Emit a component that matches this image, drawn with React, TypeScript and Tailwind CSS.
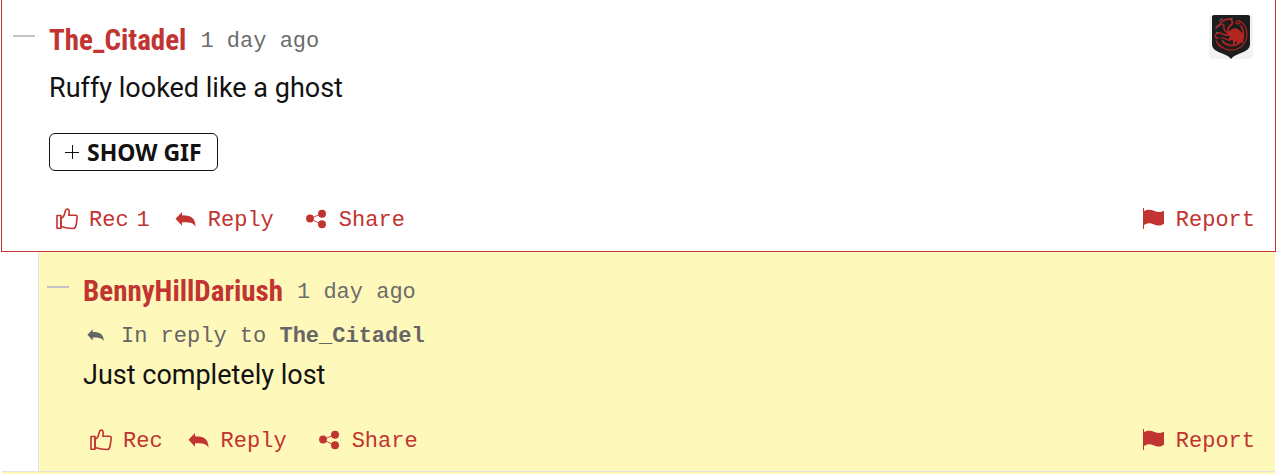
import type { ReactNode } from 'react';

interface CommentProps {
  author: string;
  time: string;
  text: string;
  recs?: number;
  replyTo?: string;
  hasGif?: boolean;
  flair?: ReactNode;
}

const MONO = "font-['Liberation_Mono',monospace]";

function ThumbIcon() {
  return (
    <svg className="h-[22px] w-[22px]" viewBox="0 0 22 22" fill="none" stroke="currentColor" strokeWidth="1.6" strokeLinejoin="round" aria-hidden="true">
      <path d="M1 7.500h4v12.800H1z" />
      <path d="M5 18.500V9.500h1.500C8.200 8.300 8.800 5.500 9.300 3 9.700.6 12.700.5 13.100 2.800c.3 1.800-.1 3.300-.3 4.400h6.500c1.500 0 2 .9 1.800 2.200-.2 2-.4 4.500-1 7.600-.4 2.200-1.200 3.600-3 3.500-4.300-.1-8-.7-12.100-2z" />
    </svg>
  );
}

function ReplyIcon({ className = 'h-[22px] w-[22px]' }: { className?: string }) {
  return (
    <svg className={className} viewBox="0 0 22 22" fill="currentColor" aria-hidden="true">
      <path d="M.5 10.800 7 4v3.300c9 0 13.500 2.500 13.500 11.500-1.500-3.500-4.500-4.800-13.500-4.600v3.600z" />
    </svg>
  );
}

function ShareIcon() {
  return (
    <svg className="h-[22px] w-[22px]" viewBox="0 0 22 22" fill="currentColor" aria-hidden="true">
      <path d="M16 5.500 4 10.700l12 5.800" fill="none" stroke="currentColor" strokeWidth="0.9" />
      <circle cx="4" cy="10.500" r="3.900" />
      <circle cx="16" cy="5.700" r="4" />
      <circle cx="16" cy="16.300" r="4" />
    </svg>
  );
}

function FlagIcon() {
  return (
    <svg className="h-[22px] w-[22px]" viewBox="0 0 22 22" fill="currentColor" aria-hidden="true">
      <path d="M0 0h1v21H0z" />
      <path d="M1 3c4-2 7-1.500 10.500 0 3.500 1.300 6 1.200 9.500-.3v13c-3.500 2.300-6.500 2.300-10 .8-4-1.700-6.500-1.500-10 .5z" />
    </svg>
  );
}

function Crest() {
  return (
    <svg className="h-11 w-11" viewBox="0 0 44 44" role="img" aria-label="House crest">
      <rect width="44" height="44" rx="4" fill="#f3f3f3" />
      <path d="M3 1.500Q3 0 5 0h34q2 0 2 1.500V29c0 5-4 7-9 9-4 1.600-8 3-10 6-2-3-6-4.400-10-6-5-2-9-4-9-9z" fill="#1c1d1e" />
      <g fill="none" stroke="#a8231f" strokeLinecap="round">
        <path d="M31 6c9 6 9 19 1 26-7 5-18 4-23-4" strokeWidth="1.300" />
        <path d="M32 11c4 6 3 13-2 17-5 4-12 3-16-1" strokeWidth="1.800" />
        <path d="M23 20c-5-4-5-7-1-10 3-3 1-6-3-6-3 0-5 2-8 4" strokeWidth="1.900" />
        <path d="M20 18c-4-1-6-4-5-7 0-3-6-2-8 2" strokeWidth="1.700" />
        <path d="M19 20c-4 1-7-3-10-2-4 1-3 6 0 5" strokeWidth="1.600" />
        <path d="M7 25c1 4 4 7 8 8M12 23c3-1 5 2 8 2" strokeWidth="1.200" />
        <path d="M27 8c1-3 4-3 4-1s-3 3-3 1" strokeWidth="1.300" />
      </g>
      <path d="M17 17c3 0 5-1 6-3 2-1 5-1 7 1 5 3 6 9 3 14l-2-4-1 5-3-4-3 5v-6l-5 1 2-5-5-1 3-1z" fill="#b52622" />
      <path d="M10 5.500l4-2M21 4l3-1M8 12l3-2M7 17l2 1M13 25l2 2" stroke="#777" strokeWidth="0.800" />
    </svg>
  );
}

function Comment({ author, time, text, recs, replyTo, hasGif, flair }: CommentProps) {
  return (
    <article className="flex gap-[14px]">
      <button type="button" aria-label="Collapse thread" className="flex h-8 w-[22px] shrink-0 items-center">
        <span className="h-[2px] w-full bg-[#c3c3c3]" />
      </button>

      <div className="min-w-0 flex-1">
        <header className="flex h-10 items-center gap-[14px] whitespace-nowrap">
          <a
            href="#author"
            className="font-['Roboto_Condensed','Liberation_Sans_Narrow',sans-serif] text-[29px] leading-10 font-bold text-[#c13431]"
          >
            {author}
          </a>
          <time className={`${MONO} pt-1 text-[22px] leading-9 text-[#6c6c6c]`}>{time}</time>
          {flair && <div className="-mt-[5px] mr-[22px] ml-auto self-start">{flair}</div>}
        </header>

        {replyTo && (
          <p className={`${MONO} mt-2 flex items-center text-[22px] leading-8 text-[#666]`}>
            <ReplyIcon className="mr-4 ml-1 h-[18px] w-[18px]" />
            <span className="pt-1 leading-7">
              In reply to <strong>{replyTo}</strong>
            </span>
          </p>
        )}

        <p className={`${replyTo ? 'mt-1' : 'mt-2'} font-['Roboto',sans-serif] text-[27px] leading-10 text-[#121212]`}>
          {text}
        </p>

        {hasGif && (
          <button
            type="button"
            className="mt-[25px] flex h-[38px] items-center gap-2 rounded-md border border-[#121212] px-[15px] font-['Noto_Sans',sans-serif] text-[23px] leading-8 font-bold text-[#121212]"
          >
            <svg className="h-[14px] w-[14px]" viewBox="0 0 14 14" stroke="currentColor" aria-hidden="true">
              <path d="M7.500 0v14M0 7.500h14" />
            </svg>
            SHOW GIF
          </button>
        )}

        {/* actions */}
        <footer
          className={`${MONO} ${hasGif ? 'mt-7' : 'mt-[25px]'} flex h-10 items-center pr-5 pl-[7px] text-[22px] leading-9 text-[#c13431]`}
        >
          <button type="button" className="flex items-center gap-[11px]">
            <ThumbIcon />
            <span className="flex gap-2 pt-1">
              <span>Rec</span>
              {recs && <span>{recs}</span>}
            </span>
          </button>
          <button type="button" className="ml-[25px] flex items-center gap-[11px]">
            <ReplyIcon />
            <span className="pt-1">Reply</span>
          </button>
          <button type="button" className="ml-8 flex items-center gap-[11px]">
            <ShareIcon />
            <span className="pt-1">Share</span>
          </button>
          <button type="button" className="ml-auto flex items-center gap-[11px]">
            <FlagIcon />
            <span className="pt-1">Report</span>
          </button>
        </footer>
      </div>
    </article>
  );
}

export default function App() {
  return (
    <main className="mr-1 ml-px bg-white">
      <section className="border-x border-b border-[#c13431] pt-5 pb-3 pl-[11px]">
        <Comment author="The_Citadel" time="1 day ago" text="Ruffy looked like a ghost" recs={1} hasGif flair={<Crest />} />
      </section>

      <section className="mr-px ml-[37px] border-l border-[#e4e4e4] bg-[#fff8bb] pt-[19px] pb-[11px] pl-2">
        <Comment author="BennyHillDariush" time="1 day ago" text="Just completely lost" replyTo="The_Citadel" />
      </section>

      {/* top edge of the next thread */}
      <div className="mr-px ml-px h-[3px] border-t border-[#e4e4e4] bg-[#fff8bb]" />
    </main>
  );
}
